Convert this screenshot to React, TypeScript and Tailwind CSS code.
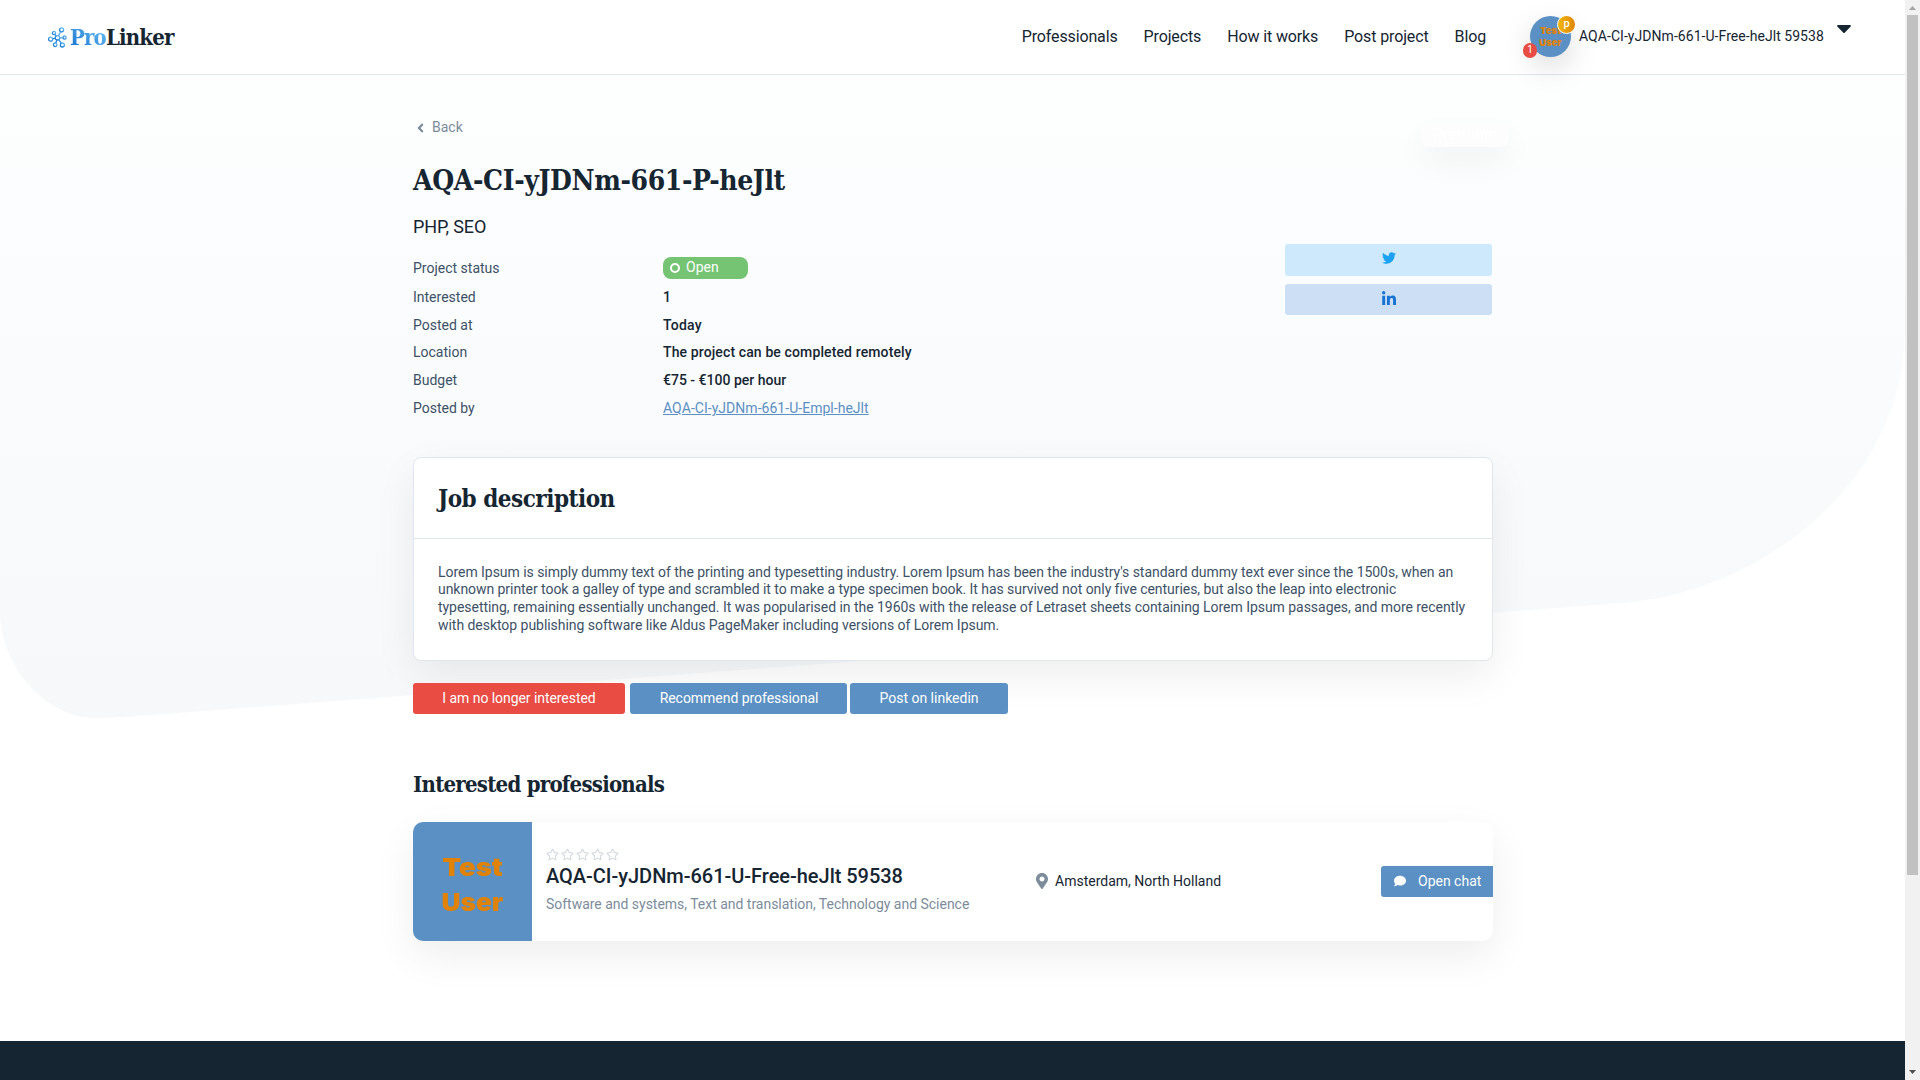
import React from "react";
import { FaTwitter, FaLinkedinIn, FaMapMarkerAlt, FaComment, FaRegStar, FaAngleLeft, FaCaretDown } from "react-icons/fa";

const navItems = ["Professionals", "Projects", "How it works", "Post project", "Blog"];

const details = [
  { label: "Interested", value: "1", row: "h-[28px]", track: "" },
  { label: "Posted at", value: "Today", row: "h-[27px]", track: "tracking-[0.2px]" },
  { label: "Location", value: "The project can be completed remotely", row: "h-[28px]", track: "tracking-[0.12px]" },
  { label: "Budget", value: "€75 - €100 per hour", row: "h-[28px]", track: "" },
];

const slab = "font-['Roboto_Slab','DejaVu_Serif_Condensed','DejaVu_Serif',serif] font-bold text-[#152531] whitespace-nowrap";

function Logo() {
  return (
    <div className="flex items-center h-[74px] ml-12">
      <svg width="19" height="21" viewBox="0 0 19 21" className="shrink-0 mt-px" fill="none" strokeWidth="1.3">
        <defs>
          <linearGradient id="mark" x1="1" y1="0" x2="0" y2="1">
            <stop offset="0" stopColor="#6cc5f7" />
            <stop offset="1" stopColor="#0c6fcd" />
          </linearGradient>
        </defs>
        <g stroke="url(#mark)">
          <circle cx="9.5" cy="10.8" r="2.2" />
          <circle cx="13.6" cy="2.8" r="2" />
          <circle cx="6" cy="6" r="1.6" />
          <circle cx="2.6" cy="12.2" r="2" />
          <circle cx="7.2" cy="17.8" r="1.8" />
          <circle cx="14.4" cy="18" r="2" />
          <circle cx="16.6" cy="10.6" r="1.6" />
          <path d="M10.4 8.8L12.7 4.6M8.2 9L6.9 7.3M7.3 11.2L4.6 11.8M8.8 13L7.8 16M10.9 12.6L13.2 16.3M11.7 10.8H15" />
        </g>
      </svg>
      <div className={`${slab} ml-[3px] -mt-px text-[22px] leading-[30px] tracking-[-0.85px]`}>
        <span className="bg-gradient-to-tr from-[#0c6fcd] to-[#6cc5f7] bg-clip-text text-transparent">Pro</span>
        <span>Linker</span>
      </div>
    </div>
  );
}

function Header() {
  return (
    <header className="relative flex h-[75px] shrink-0 border-b border-[#e2e7e9] bg-white">
      <Logo />
      <nav className="ml-auto flex h-[74px] items-center gap-[26px] text-[16px] tracking-[-0.13px]">
        {navItems.map((n) => (
          <a key={n}>{n}</a>
        ))}
      </nav>
      <div className="relative ml-11 mt-4 flex h-[41px] w-[41px] flex-col items-center justify-center rounded-full bg-[#5a90c3] font-['Inter',sans-serif] text-[9.5px] font-black leading-[12px] tracking-normal text-[#e08206] shadow-[0_10px_30px_rgba(0,0,0,0.15)]">
        <span>Test</span>
        <span>User</span>
        <span className="absolute -right-[5px] -top-[1px] flex h-[19px] w-[19px] items-center justify-center rounded-full border-[1.5px] border-white bg-gradient-to-r from-[#f2b705] to-[#df8508] pb-px font-['Roboto',sans-serif] text-[11px] font-medium text-white">p</span>
        <span className="absolute -left-[7px] top-[27px] flex h-[15px] w-[14px] items-center justify-center rounded-full bg-[#e84c43] pb-px font-['Roboto',sans-serif] text-[10px] font-normal text-white">1</span>
      </div>
      <div className="ml-2 h-[74px] w-[245px] whitespace-nowrap text-[14px] leading-[73px] tracking-[0.05px]">AQA-CI-yJDNm-661-U-Free-heJlt 59538</div>
      <FaCaretDown className="ml-[10px] mr-[51px] mt-[16px] h-[24px] w-[20px]" />
    </header>
  );
}

function Backdrop() {
  return (
    <svg className="absolute left-0 top-0" width="1905" height="1040" viewBox="0 0 1905 1040">
      <defs>
        <linearGradient id="wash" x1="0" y1="75" x2="0" y2="718" gradientUnits="userSpaceOnUse">
          <stop offset="0" stopColor="#fdfefe" />
          <stop offset="0.5" stopColor="#fafbfd" />
          <stop offset="1" stopColor="#f6f8fa" />
        </linearGradient>
      </defs>
      <path d="M0 75H1905V330C1902 500 1740 596 1621 603L131 716.500L100 718C45 720 0 665 0 612Z" fill="url(#wash)" />
    </svg>
  );
}

function ProjectSummary() {
  return (
    <section className="flex h-[382px] justify-between">
      <div className="w-[700px]">
        <a className="flex h-[20px] items-center pl-[2px] mt-[42px] text-[14px] text-[#7c8c9b]">
          <FaAngleLeft className="mr-[6px] mt-[2px] h-[14px] w-[11px]" />
          Back
        </a>
        <h1 className={`${slab} mt-[24px] text-[28px] leading-[40px] tracking-[-0.37px]`}>AQA-CI-yJDNm-661-P-heJlt</h1>
        <p className="mt-[14px] text-[18px] leading-[24px] tracking-[-0.1px]">PHP, SEO</p>
        <div className="mt-[15px] text-[14px] leading-[21px]">
          <div className="mb-[4px] flex h-[29px] items-center">
            <span className="w-[250px] text-[#3c5165]">Project status</span>
            <span className="mb-[2px] flex h-[22px] w-[85px] items-center rounded-lg bg-[#75c474] pb-px pl-[7px] text-white">
              <span className="mr-[6px] mt-px h-[10px] w-[10px] rounded-full border-2 border-white" />
              Open
            </span>
          </div>
          {details.map((d) => (
            <div key={d.label} className={`flex items-start ${d.row}`}>
              <span className="w-[250px] text-[#3c5165]">{d.label}</span>
              <span className={`font-medium ${d.track}`}>{d.value}</span>
            </div>
          ))}
          <div className="flex h-[28px] items-start">
            <span className="w-[250px] text-[#3c5165]">Posted by</span>
            <a className="text-[#5a90c3] underline tracking-[0.03px]">AQA-CI-yJDNm-661-U-Empl-heJlt</a>
          </div>
        </div>
      </div>
      <div className="relative w-[207px] mr-[1px] pt-[169px]">
        <span className="absolute left-[136px] top-12 flex h-[24px] w-[88px] items-center justify-center rounded-lg bg-[#fdfdfd] text-[16px] font-medium text-white shadow-[0_15px_30px_rgba(0,0,0,0.05)]">Premium</span>
        <a className="flex h-8 items-center justify-center rounded-[3px] bg-[#cfe9fc] pb-1">
          <FaTwitter className="h-[14px] w-[14px] text-[#1da1f2]" />
        </a>
        <a className="mt-2 flex h-[31px] items-center justify-center rounded-[3px] bg-[#cddff4] pb-[2px] pl-px">
          <FaLinkedinIn className="h-[16px] w-[16px] text-[#1573d6]" />
        </a>
      </div>
    </section>
  );
}

function JobDescription() {
  return (
    <section className="h-[204px] rounded-lg border border-[#e0e7ec] bg-white shadow-[0_15px_40px_rgba(0,0,0,0.07)]">
      <div className="h-[81px] border-b border-[#e0e7ec] px-6 pt-[21px]">
        <h2 className={`${slab} text-[24px] leading-[40px] tracking-[-0.5px]`}>Job description</h2>
      </div>
      <p className="whitespace-nowrap px-6 pt-[24.5px] text-[14px] leading-[17.7px] tracking-[-0.04px] text-[#3c5165]">
        Lorem Ipsum is simply dummy text of the printing and typesetting industry. Lorem Ipsum has been the industry's standard dummy text ever since the 1500s, when an
        <br />
        <span className="tracking-[-0.053px]">unknown printer took a galley of type and scrambled it to make a type specimen book. It has survived not only five centuries, but also the leap into electronic</span>
        <br />
        typesetting, remaining essentially unchanged. It was popularised in the 1960s with the release of Letraset sheets containing Lorem Ipsum passages, and more recently
        <br />
        with desktop publishing software like Aldus PageMaker including versions of Lorem Ipsum.
      </p>
    </section>
  );
}

function Actions() {
  return (
    <div className="mt-[22px] flex h-[31px] text-[14px] leading-[31px] text-white">
      <button className="w-[212px] rounded-[3px] bg-[#e84c43] tracking-[-0.06px]">I am no longer interested</button>
      <button className="ml-[5px] w-[217px] rounded-[3px] bg-[#5a90c3] pl-px tracking-[-0.04px]">Recommend professional</button>
      <button className="ml-[3px] w-[158px] rounded-[3px] bg-[#5a90c3]">Post on linkedin</button>
    </div>
  );
}

function ProfessionalCard() {
  return (
    <article className="mt-[20px] flex h-[119px] rounded-[10px] bg-white shadow-[0_15px_40px_rgba(0,0,0,0.07)]">
      <div className="flex w-[119px] flex-col items-center rounded-l-[10px] bg-[#5a90c3] pt-[28px] font-['Inter',sans-serif] text-[25px] font-black leading-[34.5px] tracking-normal text-[#e08206]">
        <span className="scale-x-110">Test</span>
        <span className="scale-x-105">User</span>
      </div>
      <div className="w-[490px] pl-[14px] pt-[26px]">
        <div className="flex gap-[2px] text-[#d5d9de]">
          {[0, 1, 2, 3, 4].map((i) => (
            <FaRegStar key={i} className="h-[13px] w-[13px]" />
          ))}
        </div>
        <h3 className="mt-[2px] whitespace-nowrap text-[20px] font-medium leading-[26px] tracking-[-0.03px]">AQA-CI-yJDNm-661-U-Free-heJlt 59538</h3>
        <p className="mt-[5px] whitespace-nowrap text-[14px] leading-[20px] tracking-[-0.02px] text-[#7c8c9b]">Software and systems, Text and translation, Technology and Science</p>
      </div>
      <div className="flex items-center pl-[14px] text-[14px]">
        <FaMapMarkerAlt className="mb-px mr-[7px] h-[16px] w-[12px] text-[#7c8c9b]" />
        Amsterdam, North Holland
      </div>
      <button className="ml-auto mt-11 flex h-[31px] w-[112px] items-center rounded-l-[3px] bg-[#5a90c3] pl-[13px] text-[14px] text-white">
        <FaComment className="mb-px mr-[12px] h-[12px] w-[12px]" />
        Open chat
      </button>
    </article>
  );
}

function Scrollbar() {
  return (
    <div className="flex w-[15px] flex-col items-center bg-[#f1f1f1]">
      <svg width="15" height="15" viewBox="0 0 15 15"><path d="M4 10h7L7.5 6z" fill="#a3a3a3" /></svg>
      <div className="h-[860px] w-[11px] bg-[#c1c1c1]" />
      <svg className="mt-auto" width="15" height="15" viewBox="0 0 15 15"><path d="M4 5h7L7.5 9z" fill="#505050" /></svg>
    </div>
  );
}

export default function App() {
  return (
    <div className="flex h-[1080px] w-[1920px] overflow-hidden bg-white font-['Roboto',sans-serif] text-[#152531]">
      <div className="relative flex w-[1905px] flex-col">
        <Backdrop />
        <Header />
        <main className="relative ml-[413px] w-[1080px] grow">
          <ProjectSummary />
          <JobDescription />
          <Actions />
          <h2 className={`${slab} mt-[53px] text-[22px] leading-[35px] tracking-[-0.76px]`}>Interested professionals</h2>
          <ProfessionalCard />
        </main>
        <footer className="relative h-[39px] shrink-0 bg-[#152531]" />
      </div>
      <Scrollbar />
    </div>
  );
}
